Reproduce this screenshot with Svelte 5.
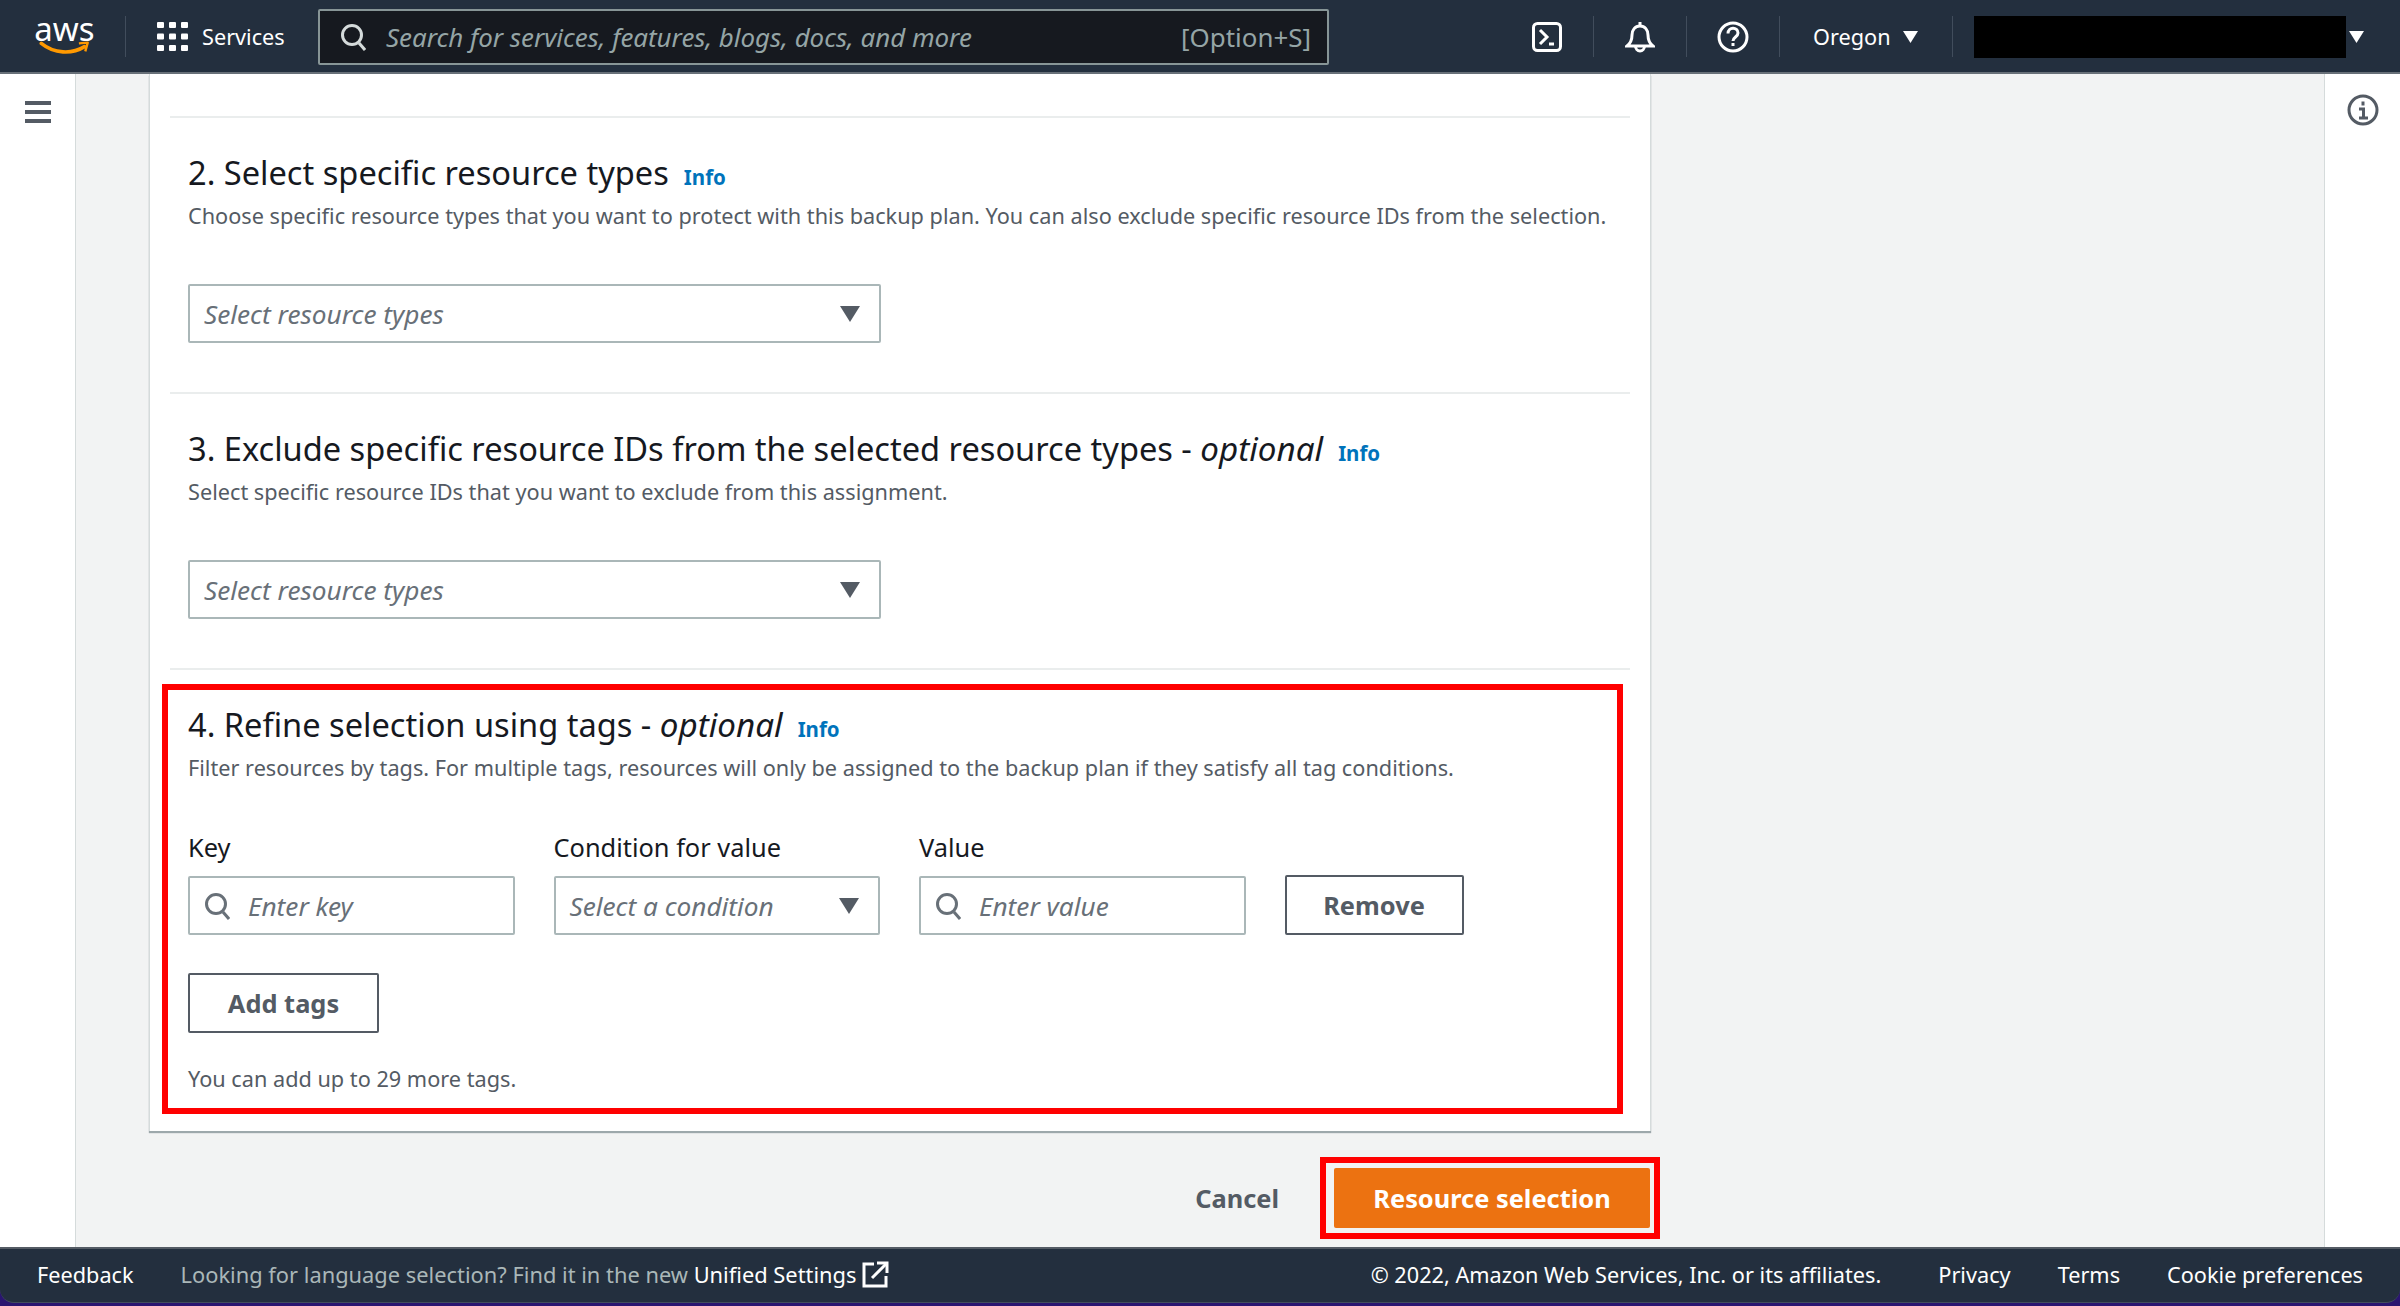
<script>
  const sections = [
    { title: '2. Select specific resource types', optional: false, desc: 'Choose specific resource types that you want to protect with this backup plan. You can also exclude specific resource IDs from the selection.' },
    { title: '3. Exclude specific resource IDs from the selected resource types - ', optional: true, desc: 'Select specific resource IDs that you want to exclude from this assignment.' }
  ];
</script>

{#snippet searchIcon()}
  <svg class="search-ico" viewBox="0 0 26 28" fill="none" stroke="currentColor" stroke-width="3"><circle cx="12" cy="12" r="9.5" /><path d="M19 20l6 7" /></svg>
{/snippet}

{#snippet caret()}
  <svg class="caret" viewBox="0 0 20 16"><path d="M0 0h20L10 16z" fill="currentColor" /></svg>
{/snippet}

<div class="page">
  <header class="topbar">
    <div class="logo">
      <span class="logo-text">aws</span>
      <svg class="smile" viewBox="0 0 62 20" fill="none"><path d="M2 3c16 13 38 14 54 4" stroke="#f90" stroke-width="4.5" stroke-linecap="round" /><path d="M49 3l11-1-3 11" stroke="#f90" stroke-width="3" stroke-linejoin="round" /></svg>
    </div>
    <div class="services">
      <svg class="grid-ico" viewBox="0 0 31 29" fill="#fff">
        {#each [0, 11.5, 23] as y}
          {#each [0, 12, 24] as x}
            <rect {x} {y} width="7" height="6" rx="1" />
          {/each}
        {/each}
      </svg>
      <span>Services</span>
    </div>
    <div class="search">
      {@render searchIcon()}
      <span class="search-text">Search for services, features, blogs, docs, and more</span>
      <span class="shortcut">[Option+S]</span>
    </div>
    <div class="tools">
      <div class="tool">
        <svg width="30" height="30" viewBox="0 0 30 30" fill="none" stroke="#fff" stroke-width="3"><rect x="1.5" y="1.5" width="27" height="27" rx="4" /><path d="M8 8l7 7-7 7" /><path d="M17 22h5" /></svg>
      </div>
      <div class="tool">
        <svg width="30" height="32" viewBox="0 0 30 32" fill="none" stroke="#fff" stroke-width="3"><path d="M2 25c4-3 5-6 5-11 0-5 3-9 8-9s8 4 8 9c0 5 1 8 5 11z" /><path d="M15 1v4" /><path d="M10.500 25a4.500 5 0 0 0 9 0" /></svg>
      </div>
      <div class="tool">
        <svg width="32" height="32" viewBox="0 0 32 32" fill="none" stroke="#fff" stroke-width="3"><circle cx="16" cy="16" r="14" /><path d="M11 12.500c0-7 10-7 10-.5 0 4-5 4-5 8" /><path d="M16 22v3" /></svg>
      </div>
      <div class="region"><span>Oregon</span>{@render caret()}</div>
      <div class="account">
        <div class="redacted"></div>
        {@render caret()}
      </div>
    </div>
  </header>

  <div class="body">
    <aside class="side">
      <svg width="26" height="22" viewBox="0 0 26 22" fill="#545b64"><rect width="26" height="4" /><rect y="9" width="26" height="4" /><rect y="18" width="26" height="4" /></svg>
    </aside>

    <main class="content">
      <div class="card">
        <div class="stub"></div>

        {#each sections as s}
          <section class="section">
            <h2>{s.title}{#if s.optional}<em>optional</em>{/if}<a class="info" href="#info">Info</a></h2>
            <p class="desc">{s.desc}</p>
            <div class="control wide">
              <span class="ph">Select resource types</span>
              {@render caret()}
            </div>
          </section>
        {/each}

        <section class="section tags">
          <div class="mark"></div>
          <h2>4. Refine selection using tags - <em>optional</em><a class="info" href="#info">Info</a></h2>
          <p class="desc">Filter resources by tags. For multiple tags, resources will only be assigned to the backup plan if they satisfy all tag conditions.</p>
          <div class="fields">
            <div class="field">
              <span class="label">Key</span>
              <div class="control">{@render searchIcon()}<span class="ph">Enter key</span></div>
            </div>
            <div class="field">
              <span class="label">Condition for value</span>
              <div class="control between"><span class="ph">Select a condition</span>{@render caret()}</div>
            </div>
            <div class="field">
              <span class="label">Value</span>
              <div class="control">{@render searchIcon()}<span class="ph">Enter value</span></div>
            </div>
            <button class="btn remove">Remove</button>
          </div>
          <button class="btn add">Add tags</button>
          <p class="desc note">You can add up to 29 more tags.</p>
        </section>
      </div>

      <div class="actions">
        <span class="cancel">Cancel</span>
        <div class="frame"><button class="primary">Resource selection</button></div>
      </div>
    </main>

    <aside class="side right">
      <svg width="32" height="32" viewBox="0 0 32 32" fill="none" stroke="#545b64" stroke-width="3"><circle cx="16" cy="16" r="14" /><path d="M16 7.500v4" /><path d="M12 15h4.500v9M12 24h9" /></svg>
    </aside>
  </div>

  <footer class="footer">
    <span class="fb">Feedback</span>
    <span class="lang">Looking for language selection? Find it in the new <b>Unified Settings</b></span>
    <svg class="ext" width="27" height="27" viewBox="0 0 27 27" fill="none" stroke="#fff" stroke-width="3"><path d="M12 3H2v22h22V15" /><path d="M10 17L25 2" /><path d="M15 2h10v10" /></svg>
    <span class="legal">© 2022, Amazon Web Services, Inc. or its affiliates.</span>
    <span class="flink first">Privacy</span>
    <span class="flink">Terms</span>
    <span class="flink">Cookie preferences</span>
  </footer>
</div>

<style>
  :global(body) {
    margin: 0;
    background: #2a1570;
  }

  .page {
    height: 1306px;
    display: flex;
    flex-direction: column;
    overflow: hidden;
    font-family: "Noto Sans", "Open Sans", sans-serif;
    font-size: 21.7px;
    color: #16191f;
  }

  /* top nav */
  .topbar {
    height: 71px;
    padding-top: 1px;
    flex: none;
    background: #232f3e;
    border-bottom: 2px solid #687078;
    display: flex;
    align-items: center;
    color: #fff;
  }

  .logo {
    width: 61px;
    margin-left: 34px;
    display: flex;
    flex-direction: column;
    align-items: center;
    padding-right: 30px;
    border-right: 1px solid #414d5c;
    height: 41px;
  }

  .logo-text {
    font-size: 33px;
    line-height: 25px;
  }

  .smile {
    width: 61px;
    height: 18px;
  }

  .services {
    display: flex;
    align-items: center;
    gap: 14px;
    margin-left: 31px;
    width: 161px;
    flex: none;
  }

  .grid-ico {
    width: 31px;
    height: 29px;
    flex: none;
  }

  .search {
    width: 1011px;
    height: 56px;
    box-sizing: border-box;
    flex: none;
    background: #16191f;
    border: 2px solid #879596;
    border-radius: 2px;
    display: flex;
    align-items: center;
    padding: 0 16px 0 20px;
    color: #d5dbdb;
    font-size: 25.9px;
  }

  .search .search-ico {
    color: #d5dbdb;
  }

  .search-text {
    font-style: italic;
    color: #95a5a6;
    margin-left: 20px;
    flex: 1;
  }

  .shortcut {
    color: #95a5a6;
  }

  .tools {
    display: flex;
    align-items: center;
    height: 41px;
    margin-left: 172px;
  }

  .tool {
    width: 93px;
    height: 41px;
    display: flex;
    align-items: center;
    justify-content: center;
    border-right: 1px solid #414d5c;
    box-sizing: border-box;
  }

  .region {
    width: 173px;
    height: 41px;
    box-sizing: border-box;
    display: flex;
    align-items: center;
    gap: 12px;
    padding-left: 33px;
    border-right: 1px solid #414d5c;
  }

  .account {
    display: flex;
    align-items: center;
    gap: 3px;
    margin-left: 21px;
  }

  .redacted {
    width: 372px;
    height: 42px;
    background: #000;
  }

  .caret {
    width: 15px;
    height: 12px;
    flex: none;
  }

  /* middle */
  .body {
    flex: 1;
    min-height: 0;
    display: grid;
    grid-template-columns: 76px 1fr 76px;
    background: #f2f3f3;
  }

  .side {
    background: #fff;
    border-right: 1px solid #d5dbdb;
    padding: 26px 0 0 25px;
  }

  .side.right {
    border-right: 0;
    border-left: 1px solid #d5dbdb;
    padding: 20px 0 0 22px;
  }

  .content {
    padding-left: 73px;
  }

  .card {
    width: 1502px;
    box-sizing: border-box;
    background: #fff;
    padding: 0 20px 0 20px;
    border-left: 1px solid #d5dbdb;
    border-right: 1px solid #d5dbdb;
    box-shadow: 0 2px 1px rgba(0, 28, 36, 0.35);
  }

  .stub {
    height: 42px;
  }

  .section {
    position: relative;
    border-top: 2px solid #eaeded;
    padding: 33px 0 49px 18px;
  }

  .tags {
    padding-bottom: 37px;
  }

  /* red annotation over the section */
  .mark {
    position: absolute;
    left: -8px;
    right: 7px;
    top: 14px;
    bottom: 17px;
    border: 6px solid #f00;
    pointer-events: none;
  }

  h2 {
    margin: 0;
    font-size: 32.6px;
    font-weight: 400;
    line-height: 44px;
  }

  h2 em {
    font-size: 33.2px;
  }

  .info {
    margin-left: 15px;
    font-size: 20.5px;
    line-height: 1;
    font-weight: 700;
    color: #0073bb;
    text-decoration: none;
  }

  .desc {
    margin: 6px 0 0;
    line-height: 30px;
    color: #545b64;
  }

  .note {
    margin-top: 31px;
  }

  .control {
    height: 59px;
    box-sizing: border-box;
    border: 2px solid #aab7b8;
    border-radius: 2px;
    background: #fff;
    display: flex;
    align-items: center;
    padding: 0 19px 0 14px;
    color: #545b64;
    font-size: 26.2px;
  }

  .control.wide {
    width: 693px;
    margin-top: 53px;
    justify-content: space-between;
  }

  .control.between {
    justify-content: space-between;
  }

  .control .caret {
    width: 20px;
    height: 16px;
  }

  .search-ico {
    width: 26px;
    height: 28px;
    flex: none;
    margin-right: 18px;
    color: #687078;
  }

  .search .search-ico {
    margin-right: 0;
  }

  .ph {
    font-style: italic;
    color: #687078;
  }

  .fields {
    display: flex;
    align-items: flex-end;
    gap: 39px;
    margin-top: 50px;
  }

  .field {
    width: 326.5px;
    display: flex;
    flex-direction: column;
    gap: 11px;
  }

  .label {
    line-height: 29px;
    padding-bottom: 3px;
    font-size: 25.4px;
  }

  .btn {
    height: 60px;
    box-sizing: border-box;
    background: #fff;
    border: 2px solid #545b64;
    border-radius: 2px;
    font: 700 25.4px "Noto Sans", sans-serif;
    color: #545b64;
    padding: 0;
  }

  .remove {
    width: 179px;
  }

  .add {
    display: block;
    width: 191px;
    margin-top: 38px;
  }

  .actions {
    display: flex;
    justify-content: flex-end;
    align-items: center;
    width: 1502px;
    margin-top: 26px;
  }

  .cancel {
    font-weight: 700;
    font-size: 25.4px;
    color: #545b64;
    margin-right: 41px;
  }

  .frame {
    border: 6px solid #f00;
    padding: 5px 4px 5px 8px;
    margin-right: -9px;
  }

  .primary {
    display: block;
    width: 316px;
    height: 60px;
    border: 0;
    border-radius: 2px;
    background: #ec7211;
    color: #fff;
    font: 700 25.4px "Noto Sans", sans-serif;
  }

  /* footer */
  .footer {
    height: 56px;
    flex: none;
    box-sizing: border-box;
    background: #232f3e;
    border-top: 2px solid #545b64;
    border-bottom: 1px solid #414d5c;
    border-radius: 0 0 14px 14px;
    display: flex;
    align-items: center;
    padding: 0 37px 2px;
    color: #fff;
    margin-bottom: 3px;
  }

  .fb {
    margin-right: 47px;
  }

  .lang {
    color: #aab7b8;
    font-size: 21.85px;
  }

  .lang b {
    font-weight: 400;
    color: #fff;
  }

  .ext {
    margin-left: 6px;
  }

  .legal {
    margin-left: auto;
  }

  .flink {
    margin-left: 47px;
  }

  .flink.first {
    margin-left: 57px;
  }
</style>
